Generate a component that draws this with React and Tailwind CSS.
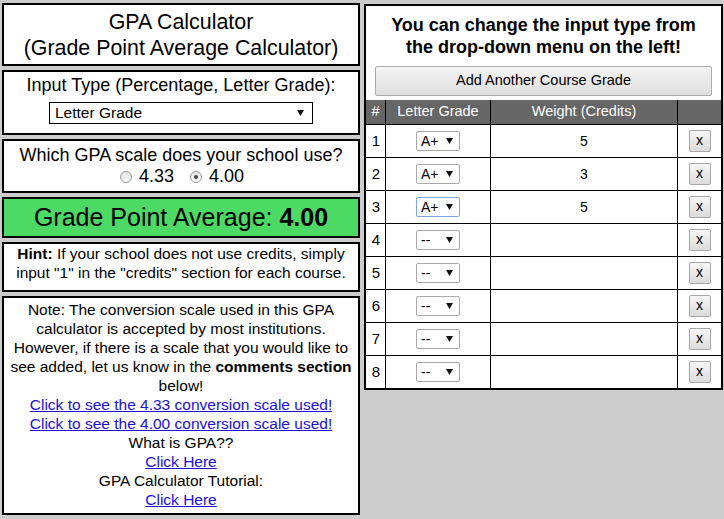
import React, { useState } from 'react';

const font = { fontFamily: '"Liberation Sans", Arial, sans-serif' };

const Caret = () => (
  <svg width="7" height="6" viewBox="0 0 7 6" className="shrink-0">
    <polygon points="0,0 7,0 3.5,6" fill="#111" />
  </svg>
);

const GradeSelect = ({ value, focused }) => (
  <div
    className={
      'w-[44px] h-[20px] rounded-[2px] bg-white flex items-center justify-between pl-[4px] pr-[6px] text-[14px] ' +
      (focused ? 'border border-[#7ba7e1]' : 'border border-[#a9a9a9]')
    }
  >
    <span className="leading-none">{value}</span>
    <Caret />
  </div>
);

const RemoveButton = () => (
  <button className="w-[22px] h-[22px] rounded-[2px] border border-[#a7a7a7] bg-gradient-to-b from-[#f6f6f6] to-[#dcdcdc] text-[14px] leading-none text-black flex items-center justify-center pb-[2px]">
    x
  </button>
);

const Radio = ({ checked }) => (
  <span className="w-[12px] h-[12px] rounded-full border border-[#9a9a9a] bg-gradient-to-b from-[#e4e4e4] to-[#f8f8f8] flex items-center justify-center">
    {checked && <span className="w-[4px] h-[4px] rounded-full bg-[#444]" />}
  </span>
);

const courses = [
  { grade: 'A+', credits: '5' },
  { grade: 'A+', credits: '3' },
  { grade: 'A+', credits: '5', focused: true },
  { grade: '--', credits: '' },
  { grade: '--', credits: '' },
  { grade: '--', credits: '' },
  { grade: '--', credits: '' },
  { grade: '--', credits: '' },
];

const App = () => {
  const [scale] = useState('4.00');

  return (
    <div className="w-[724px] h-[519px] bg-[#cccccc] flex gap-[4px] pl-[2px] pt-[3px] text-black" style={font}>
      {/* Left column: settings, result and notes */}
      <div className="w-[358px] flex flex-col gap-[4px]">
        <div className="h-[63px] bg-white border-2 border-black flex flex-col justify-center items-center text-[21.4px] leading-[26px]">
          <div>GPA Calculator</div>
          <div className="whitespace-nowrap">(Grade Point Average Calculator)</div>
        </div>

        <div className="h-[65px] bg-white border-2 border-black flex flex-col items-center pt-[3px]">
          <div className="text-[18px] leading-[21px] whitespace-nowrap">Input Type (Percentage, Letter Grade):</div>
          <div className="mt-[6px] w-[264px] h-[22px] border border-black bg-white flex items-center justify-between pl-[5px] pr-[8px] text-[15.5px]">
            <span>Letter Grade</span>
            <Caret />
          </div>
        </div>

        <div className="h-[54px] bg-white border-2 border-black flex flex-col items-center pt-[4px]">
          <div className="text-[18px] leading-[21px] whitespace-nowrap">Which GPA scale does your school use?</div>
          <div className="flex items-center h-[21px] text-[18px] pl-[2px]">
            <Radio checked={scale === '4.33'} />
            <span className="ml-[7px]">4.33</span>
            <span className="ml-[16px]" />
            <Radio checked={scale === '4.00'} />
            <span className="ml-[7px]">4.00</span>
          </div>
        </div>

        <div className="h-[41px] bg-[#4cd964] border-2 border-black flex items-center justify-center text-[25px]">
          <span className="whitespace-nowrap">
            Grade Point Average: <b>{scale}</b>
          </span>
        </div>

        <div className="h-[50px] bg-white border-2 border-black flex flex-col items-center text-[15.5px] leading-[19px] whitespace-nowrap">
          <div>
            <b>Hint:</b> If your school does not use credits, simply
          </div>
          <div>input "1" in the "credits" section for each course.</div>
        </div>

        <div className="h-[219px] bg-white border-2 border-black flex flex-col items-center pt-[2px] text-[15.5px] leading-[19px] whitespace-nowrap">
          <div>Note: The conversion scale used in this GPA</div>
          <div>calculator is accepted by most institutions.</div>
          <div>However, if there is a scale that you would like to</div>
          <div>
            see added, let us know in the <b>comments section</b>
          </div>
          <div>below!</div>
          <a href="#" className="text-[#1c10d6] underline">Click to see the 4.33 conversion scale used!</a>
          <a href="#" className="text-[#1c10d6] underline">Click to see the 4.00 conversion scale used!</a>
          <div>What is GPA??</div>
          <a href="#" className="text-[#1c10d6] underline">Click Here</a>
          <div>GPA Calculator Tutorial:</div>
          <a href="#" className="text-[#1c10d6] underline">Click Here</a>
        </div>
      </div>

      {/* Right column: course table */}
      <div className="w-[359px] self-start mt-px bg-white border-2 border-black flex flex-col">
        <div className="pt-[8px] text-center font-bold text-[18px] leading-[22px]">
          <div>You can change the input type from</div>
          <div>the drop-down menu on the left!</div>
        </div>

        <button className="mt-[8px] mx-[9px] h-[30px] rounded-[2px] border border-[#acacac] bg-gradient-to-b from-[#f4f4f4] to-[#dedede] text-[14.5px] text-black">
          Add Another Course Grade
        </button>

        <div className="mt-[4px] h-[24px] bg-[#666666] text-white text-[14.5px] flex items-center">
          <div className="w-[20px] h-full border-r border-black flex items-center justify-center">#</div>
          <div className="w-[105px] h-full border-r border-black flex items-center justify-center">Letter Grade</div>
          <div className="w-[187px] h-full border-r border-black flex items-center justify-center">Weight (Credits)</div>
          <div className="flex-1 h-full" />
        </div>

        {courses.map((c, i) => (
          <div key={i} className="h-[33px] border-t border-black flex">
            <div className="w-[20px] border-r border-black flex items-center justify-center text-[15px] pl-px">{i + 1}</div>
            <div className="w-[105px] border-r border-black flex items-center justify-center">
              <GradeSelect value={c.grade} focused={c.focused} />
            </div>
            <div className="w-[187px] border-r border-black flex items-center justify-center text-[14px]">{c.credits}</div>
            <div className="flex-1 flex items-center justify-center">
              <RemoveButton />
            </div>
          </div>
        ))}
      </div>
    </div>
  );
};

export default App;
